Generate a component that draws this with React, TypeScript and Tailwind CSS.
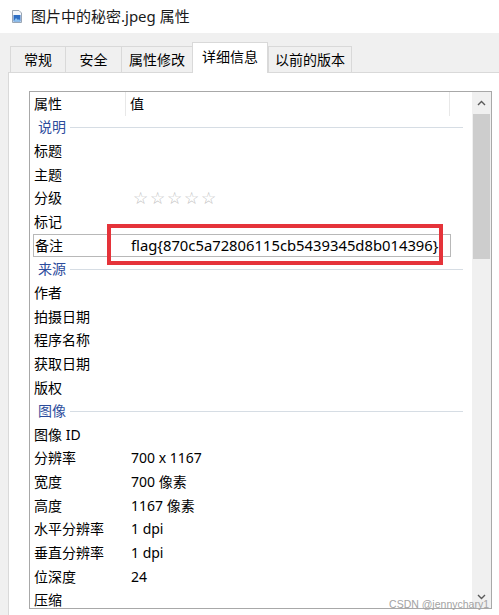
import React from "react";

type Row =
  | { kind: "group"; label: string }
  | { kind: "row"; label: string; value?: string; stars?: boolean; edit?: boolean };

const rows: Row[] = [
  { kind: "group", label: "说明" },
  { kind: "row", label: "标题" },
  { kind: "row", label: "主题" },
  { kind: "row", label: "分级", stars: true },
  { kind: "row", label: "标记" },
  { kind: "row", label: "备注", value: "flag{870c5a72806115cb5439345d8b014396}", edit: true },
  { kind: "group", label: "来源" },
  { kind: "row", label: "作者" },
  { kind: "row", label: "拍摄日期" },
  { kind: "row", label: "程序名称" },
  { kind: "row", label: "获取日期" },
  { kind: "row", label: "版权" },
  { kind: "group", label: "图像" },
  { kind: "row", label: "图像 ID" },
  { kind: "row", label: "分辨率", value: "700 x 1167" },
  { kind: "row", label: "宽度", value: "700 像素" },
  { kind: "row", label: "高度", value: "1167 像素" },
  { kind: "row", label: "水平分辨率", value: "1 dpi" },
  { kind: "row", label: "垂直分辨率", value: "1 dpi" },
  { kind: "row", label: "位深度", value: "24" },
  { kind: "row", label: "压缩" },
];

const tabs = [
  { label: "常规", w: "w-[56px]" },
  { label: "安全", w: "w-[57px]" },
  { label: "属性修改", w: "w-[72px]" },
  { label: "详细信息", w: "w-[76px]", active: true },
  { label: "以前的版本", w: "w-[84px]" },
];

function FileIcon() {
  return (
    <svg width="10" height="13" viewBox="0 0 10 13">
      <path d="M0.5 0.5 H7 L9.5 3 V12.5 H0.5 Z" fill="#f4f7fb" stroke="#9aa6b4" />
      <rect x="1.5" y="5" width="7" height="6.5" fill="#2f6fc4" />
      <path d="M1.5 11.5 L4 8 L6 10 L7 9 L8.5 11.5 Z" fill="#8cc0ee" />
    </svg>
  );
}

function Chevron({ up }: { up?: boolean }) {
  return (
    <svg width="9" height="6" viewBox="0 0 9 6">
      <path
        d={up ? "M1 5 L4.5 1.5 L8 5" : "M1 1 L4.5 4.5 L8 1"}
        fill="none"
        stroke="#5a5a5a"
        strokeWidth="1.4"
      />
    </svg>
  );
}

export default function App() {
  return (
    <div className="relative w-[499px] h-[615px] overflow-hidden bg-[#f0f0f0] text-black font-['Noto_Sans','Noto_Sans_CJK_SC',sans-serif]">
      {/* Title bar */}
      <div className="h-[33px] bg-white flex items-center pl-[12px] gap-[9px]">
        <FileIcon />
        <span className="text-[15px] leading-none text-[#1a1a1a]">图片中的秘密.jpeg 属性</span>
      </div>

      {/* Tabs */}
      <div className="flex items-end h-[39px] pl-[10px]">
        {tabs.map((t) =>
          t.active ? (
            <div
              key={t.label}
              className={`${t.w} h-[31px] -mb-px relative z-10 bg-white border border-b-0 border-[#d9d9d9] flex items-center justify-center text-[14px] leading-none pb-[2px]`}
            >
              {t.label}
            </div>
          ) : (
            <div
              key={t.label}
              className={`${t.w} h-[26px] -mr-px border border-b-0 border-[#d9d9d9] bg-[#f0f0f0] flex items-center justify-center text-[14px] leading-none`}
            >
              {t.label}
            </div>
          )
        )}
      </div>

      {/* Panel */}
      <div className="ml-[8px] h-[543px] bg-white border-l border-t border-[#d9d9d9] pl-[20px] pt-[18px]">
        <div className="w-[463px] h-[518px] border border-[#a8a8a8] flex">
          <div className="flex-1 flex flex-col overflow-hidden">
            {/* Header */}
            <div className="flex h-[23.65px] shrink-0 text-[14px] leading-none">
              <div className="w-[96px] pl-[4px] flex items-center border-r border-[#e8e8e8]">属性</div>
              <div className="w-[324px] pl-[4px] flex items-center border-r border-[#e8e8e8]">值</div>
              <div className="flex-1" />
            </div>
            {rows.map((r, i) =>
              r.kind === "group" ? (
                <div key={i} className="flex items-center h-[23.65px] shrink-0 pl-[8px] pr-[9px]">
                  <span className="text-[14px] leading-none text-[#2c4c9c]">{r.label}</span>
                  <div className="flex-1 h-px bg-[#d6dde4] ml-[4px]" />
                </div>
              ) : r.edit ? (
                <div key={i} className="flex items-center h-[23.65px] shrink-0">
                  <div className="ml-[3px] w-[418px] h-full border border-[#b8b8b8] flex items-center text-[14px] leading-none">
                    <div className="w-[97px] pl-[1px]">{r.label}</div>
                    <div className="flex-1 text-[14.8px] whitespace-nowrap">{r.value}</div>
                  </div>
                </div>
              ) : (
                <div key={i} className="flex items-center h-[23.65px] shrink-0 text-[14px] leading-none">
                  <div className="w-[101px] pl-[4px]">{r.label}</div>
                  {r.stars ? (
                    <div className="flex pl-[2px] text-[#c2c2c2] text-[17px] font-['DejaVu_Sans',sans-serif]">
                      {[0, 1, 2, 3, 4].map((s) => (
                        <span key={s} className="w-[17px]">☆</span>
                      ))}
                    </div>
                  ) : (
                    <div className="flex-1">{r.value ?? ""}</div>
                  )}
                </div>
              )
            )}
          </div>
          {/* Scrollbar */}
          <div className="w-[19px] bg-[#f0f0f0] flex flex-col">
            <div className="h-[22px] flex items-center justify-center">
              <Chevron up />
            </div>
            <div className="h-[145px] mx-[1px] bg-[#cdcdcd]" />
            <div className="flex-1" />
            <div className="h-[22px] flex items-center justify-center">
              <Chevron />
            </div>
          </div>
        </div>
      </div>

      {/* Red annotation box */}
      <div className="absolute left-[107px] top-[224px] w-[336px] h-[41px] border-[4px] border-[#e5333a]" />

      {/* Watermark */}
      <div className="absolute right-[10px] bottom-[6px] text-[10.5px] leading-none text-[#a3a3a3] font-['Liberation_Sans',sans-serif]">
        CSDN @jennychary1
      </div>
    </div>
  );
}
